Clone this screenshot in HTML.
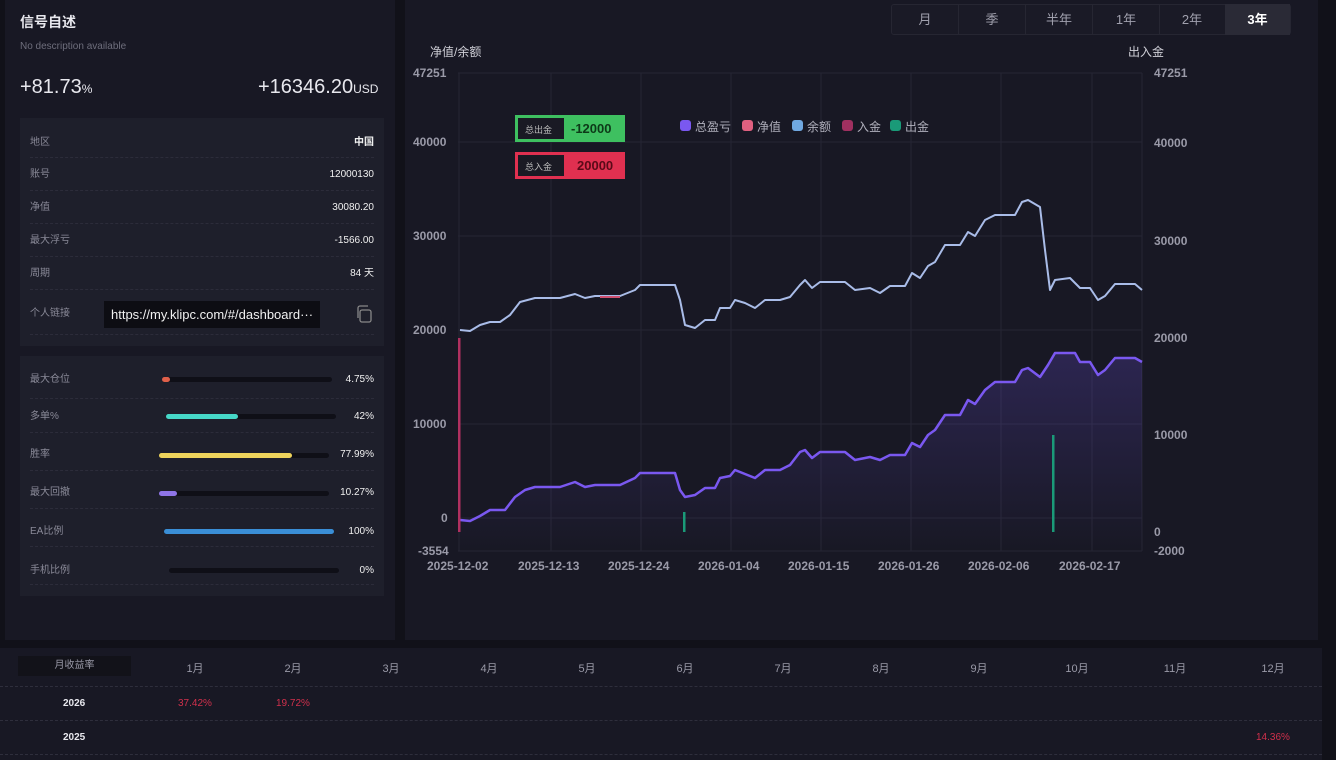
<!DOCTYPE html>
<html><head><meta charset="utf-8"><style>
*{margin:0;padding:0;box-sizing:border-box}
body{width:1336px;height:760px;background:#111119;font-family:"Liberation Sans","Noto Sans CJK SC",sans-serif;color:#e8e8ee;position:relative;overflow:hidden}
.a{position:absolute}
.p{background:#181824}
.lab,.val{font-size:10px;line-height:14px}
.lab{color:#8a8a98}
.val{color:#f0f0f0;text-align:right}
.row{position:absolute;left:30px;width:344px;border-bottom:1px dashed #2c2c3a}
.bar{position:absolute;height:5px;border-radius:3px;background:#0f0f17}
.bar i{position:absolute;left:0;top:0;height:5px;border-radius:3px}
.tab{position:absolute;top:4px;height:31px;width:67px;text-align:center;line-height:31px;font-size:13px;color:#a0a0ad;border-right:1px solid #262632}
.ax{position:absolute;font-size:12px;color:#9a9aa8;font-weight:bold}
.mo{position:absolute;top:660px;font-size:11px;color:#9a9aa8;width:60px;text-align:center}
</style></head><body>
<div class="a p" style="left:5px;top:0;width:390px;height:640px"></div>
<div class="a" style="left:20px;top:12px;font-size:14px;font-weight:bold">信号自述</div>
<div class="a" style="left:20px;top:41px;font-size:10px;color:#6e6e7c">No description available</div>
<div class="a" style="left:20px;top:76px;font-size:20px">+81.73<span style="font-size:12px">%</span></div>
<div class="a" style="left:258px;top:76px;font-size:20px">+16346.20<span style="font-size:12px">USD</span></div>
<div class="a" style="left:20px;top:118px;width:364px;height:228px;background:#1e1f2b"></div>
<div class="row" style="top:128px;height:30px"><span class="a lab" style="top:8px">地区</span><span class="a val" style="right:0;top:8px;font-weight:bold">中国</span></div>
<div class="row" style="top:158px;height:33px"><span class="a lab" style="top:10px">账号</span><span class="a val" style="right:0;top:10px">12000130</span></div>
<div class="row" style="top:191px;height:33px"><span class="a lab" style="top:10px">净值</span><span class="a val" style="right:0;top:10px">30080.20</span></div>
<div class="row" style="top:224px;height:33px"><span class="a lab" style="top:10px">最大浮亏</span><span class="a val" style="right:0;top:10px">-1566.00</span></div>
<div class="row" style="top:257px;height:33px"><span class="a lab" style="top:10px">周期</span><span class="a val" style="right:0;top:10px">84 天</span></div>
<div class="row" style="top:290px;height:45px"><span class="a lab" style="top:17px">个人链接</span></div>
<div class="a" style="left:104px;top:301px;width:216px;height:27px;background:#0d0d13;font-size:13px;line-height:27px;padding-left:7px;color:#f0f0f0;white-space:nowrap;overflow:hidden">https://my.klipc.com/#/dashboard···</div>
<svg class="a" style="left:355px;top:305px" width="18" height="18" viewBox="0 0 18 18" fill="none" stroke="#888" stroke-width="1.3"><rect x="5" y="5" width="11" height="12" rx="2"/><path d="M3 13V3a2 2 0 0 1 2-2h8"/></svg>
<div class="a" style="left:20px;top:356px;width:364px;height:240px;background:#1e1f2b"></div>
<div class="row" style="top:362px;height:37px"><span class="a lab" style="top:11px">最大仓位</span><span class="a val" style="right:0;top:11px">4.75%</span></div>
<div class="bar" style="left:162px;top:377px;width:170px"><i style="width:8px;background:#e0604a"></i></div>
<div class="row" style="top:399px;height:34px"><span class="a lab" style="top:11px">多单%</span><span class="a val" style="right:0;top:11px">42%</span></div>
<div class="bar" style="left:166px;top:414px;width:170px"><i style="width:72px;background:#46d8c8"></i></div>
<div class="row" style="top:433px;height:38px"><span class="a lab" style="top:15px">胜率</span><span class="a val" style="right:0;top:15px">77.99%</span></div>
<div class="bar" style="left:159px;top:453px;width:170px"><i style="width:133px;background:#eed35c"></i></div>
<div class="row" style="top:471px;height:38px"><span class="a lab" style="top:15px">最大回撤</span><span class="a val" style="right:0;top:15px">10.27%</span></div>
<div class="bar" style="left:159px;top:491px;width:170px"><i style="width:18px;background:#8f75e8"></i></div>
<div class="row" style="top:509px;height:38px"><span class="a lab" style="top:16px">EA比例</span><span class="a val" style="right:0;top:16px">100%</span></div>
<div class="bar" style="left:164px;top:529px;width:170px"><i style="width:170px;background:#3a8ed6"></i></div>
<div class="row" style="top:547px;height:38px"><span class="a lab" style="top:17px">手机比例</span><span class="a val" style="right:0;top:17px">0%</span></div>
<div class="bar" style="left:169px;top:568px;width:170px"></div>

<div class="a p" style="left:405px;top:0;width:913px;height:640px"></div>
<div class="a" style="left:891px;top:4px;width:400px;height:31px;background:#1a1a26;border:1px solid #262632;border-radius:3px"></div>
<div class="tab" style="left:892px">月</div><div class="tab" style="left:959px">季</div><div class="tab" style="left:1026px">半年</div><div class="tab" style="left:1093px">1年</div><div class="tab" style="left:1159px">2年</div>
<div class="tab" style="left:1225px;width:65px;background:#2a2a36;color:#fff;font-weight:bold;border:none">3年</div>
<div class="a" style="left:430px;top:43px;font-size:12px;color:#d0d0d8">净值/余额</div>
<div class="a" style="left:1128px;top:43px;font-size:12px;color:#d0d0d8">出入金</div>
<div class="ax" style="left:413px;top:66px">47251</div><div class="ax" style="left:413px;top:135px">40000</div><div class="ax" style="left:413px;top:229px">30000</div><div class="ax" style="left:413px;top:323px">20000</div><div class="ax" style="left:413px;top:417px">10000</div><div class="ax" style="left:441px;top:511px">0</div><div class="ax" style="left:418px;top:544px">-3554</div>
<div class="ax" style="left:1154px;top:66px">47251</div><div class="ax" style="left:1154px;top:136px">40000</div><div class="ax" style="left:1154px;top:234px">30000</div><div class="ax" style="left:1154px;top:331px">20000</div><div class="ax" style="left:1154px;top:428px">10000</div><div class="ax" style="left:1154px;top:525px">0</div><div class="ax" style="left:1154px;top:544px">-2000</div>
<svg class="a" style="left:0;top:0" width="1336" height="640">
<defs><linearGradient id="g" x1="0" y1="0" x2="0" y2="1"><stop offset="0" stop-color="#6a4fd8" stop-opacity=".25"/><stop offset="1" stop-color="#6a4fd8" stop-opacity="0"/></linearGradient></defs>
<g stroke="#262634" stroke-width="1">
<path d="M458 73H1142M458 142H1142M458 236H1142M458 330H1142M458 424H1142M458 518H1142M458 551H1142"/>
<path d="M459 73V551M551 73V551M641 73V551M731 73V551M821 73V551M911 73V551M1001 73V551M1092 73V551M1142 73V551"/>
</g>
<path fill="url(#g)" d="M460 520L470 521L480 516L490 510L505 510L515 497L525 490L535 487L560 487L575 482L585 487L595 485L620 485L635 478L640 473L675 473L680 490L685 497L695 495L705 488L715 488L720 478L730 476L735 470L745 474L755 478L765 470L780 470L790 465L800 452L805 450L812 458L820 452L845 452L855 460L870 457L880 460L890 455L905 455L912 443L920 447L928 435L935 430L945 415L960 415L968 400L975 404L985 390L995 382L1015 382L1022 370L1028 368L1040 377L1048 365L1055 353L1075 353L1080 362L1090 362L1098 375L1105 370L1115 358L1135 358L1142 362V551H460Z"/>
<path fill="none" stroke="#7a58f0" stroke-width="2.5" stroke-linejoin="round" d="M460 520L470 521L480 516L490 510L505 510L515 497L525 490L535 487L560 487L575 482L585 487L595 485L620 485L635 478L640 473L675 473L680 490L685 497L695 495L705 488L715 488L720 478L730 476L735 470L745 474L755 478L765 470L780 470L790 465L800 452L805 450L812 458L820 452L845 452L855 460L870 457L880 460L890 455L905 455L912 443L920 447L928 435L935 430L945 415L960 415L968 400L975 404L985 390L995 382L1015 382L1022 370L1028 368L1040 377L1048 365L1055 353L1075 353L1080 362L1090 362L1098 375L1105 370L1115 358L1135 358L1142 362"/>
<path fill="none" stroke="#a9bce8" stroke-width="2" stroke-linejoin="round" d="M460 330L470 331L480 325L490 322L500 322L510 315L520 302L535 298L560 298L575 294L585 298L595 296L620 296L635 290L640 285L675 285L680 300L685 325L695 328L705 320L715 320L720 308L730 308L735 300L745 303L755 308L765 300L780 300L790 297L800 285L805 280L812 288L820 282L845 282L855 290L870 288L880 293L890 286L905 286L912 273L920 278L928 266L935 262L945 245L960 245L968 232L975 236L985 220L995 215L1015 215L1022 202L1028 200L1040 207L1045 250L1050 290L1055 280L1070 278L1080 288L1090 288L1098 300L1105 296L1115 284L1135 284L1142 290"/>
<path d="M600 297H620" stroke="#d05070" stroke-width="2"/>
<rect x="458" y="338" width="2.5" height="194" fill="#b03060"/>
<rect x="683" y="512" width="2.5" height="20" fill="#1a9a78"/>
<rect x="1052" y="435" width="2.5" height="97" fill="#1a9a78"/>
<rect x="515" y="115" width="110" height="27" fill="#3ec060"/><rect x="518" y="118" width="46" height="21" fill="#1a1a24"/>
<rect x="515" y="152" width="110" height="27" fill="#e03050"/><rect x="518" y="155" width="46" height="21" fill="#1a1a24"/>
<rect x="680" y="120" width="11" height="11" rx="3" fill="#7a58f0"/><rect x="742" y="120" width="11" height="11" rx="3" fill="#e06080"/><rect x="792" y="120" width="11" height="11" rx="3" fill="#70a8e0"/><rect x="842" y="120" width="11" height="11" rx="3" fill="#a03060"/><rect x="890" y="120" width="11" height="11" rx="3" fill="#1a9a78"/>
</svg>
<div class="a" style="left:525px;top:123px;font-size:9px;color:#bbb">总出金</div>
<div class="a" style="left:571px;top:121px;font-size:13px;color:#0d3a18;font-weight:bold">-12000</div>
<div class="a" style="left:525px;top:160px;font-size:9px;color:#bbb">总入金</div>
<div class="a" style="left:577px;top:158px;font-size:13px;color:#5a0a18;font-weight:bold">20000</div>
<div class="a" style="left:695px;top:118px;font-size:12px;color:#b0b0bc">总盈亏</div>
<div class="a" style="left:757px;top:118px;font-size:12px;color:#b0b0bc">净值</div>
<div class="a" style="left:807px;top:118px;font-size:12px;color:#b0b0bc">余额</div>
<div class="a" style="left:857px;top:118px;font-size:12px;color:#b0b0bc">入金</div>
<div class="a" style="left:905px;top:118px;font-size:12px;color:#b0b0bc">出金</div>
<div class="ax" style="left:427px;top:559px">2025-12-02</div><div class="ax" style="left:518px;top:559px">2025-12-13</div><div class="ax" style="left:608px;top:559px">2025-12-24</div><div class="ax" style="left:698px;top:559px">2026-01-04</div><div class="ax" style="left:788px;top:559px">2026-01-15</div><div class="ax" style="left:878px;top:559px">2026-01-26</div><div class="ax" style="left:968px;top:559px">2026-02-06</div><div class="ax" style="left:1059px;top:559px">2026-02-17</div>

<div class="a p" style="left:0;top:648px;width:1322px;height:112px"></div>
<div class="a" style="left:18px;top:656px;width:113px;height:20px;background:#121219;font-size:10px;color:#9a9aa8;text-align:center;line-height:20px">月收益率</div>
<div class="mo" style="left:165px">1月</div><div class="mo" style="left:263px">2月</div><div class="mo" style="left:361px">3月</div><div class="mo" style="left:459px">4月</div><div class="mo" style="left:557px">5月</div><div class="mo" style="left:655px">6月</div><div class="mo" style="left:753px">7月</div><div class="mo" style="left:851px">8月</div><div class="mo" style="left:949px">9月</div><div class="mo" style="left:1047px">10月</div><div class="mo" style="left:1145px">11月</div><div class="mo" style="left:1243px">12月</div>
<div class="a" style="left:0;top:686px;width:1322px;border-top:1px dashed #2e2e3c"></div>
<div class="a" style="left:0;top:720px;width:1322px;border-top:1px dashed #2e2e3c"></div>
<div class="a" style="left:0;top:754px;width:1322px;border-top:1px dashed #2e2e3c"></div>
<div class="a" style="left:63px;top:698px;font-size:10px;font-weight:bold">2026</div>
<div class="a" style="left:178px;top:698px;font-size:10px;color:#d0304c">37.42%</div>
<div class="a" style="left:276px;top:698px;font-size:10px;color:#d0304c">19.72%</div>
<div class="a" style="left:63px;top:732px;font-size:10px;font-weight:bold">2025</div>
<div class="a" style="left:1256px;top:732px;font-size:10px;color:#d0304c">14.36%</div>
</body></html>
